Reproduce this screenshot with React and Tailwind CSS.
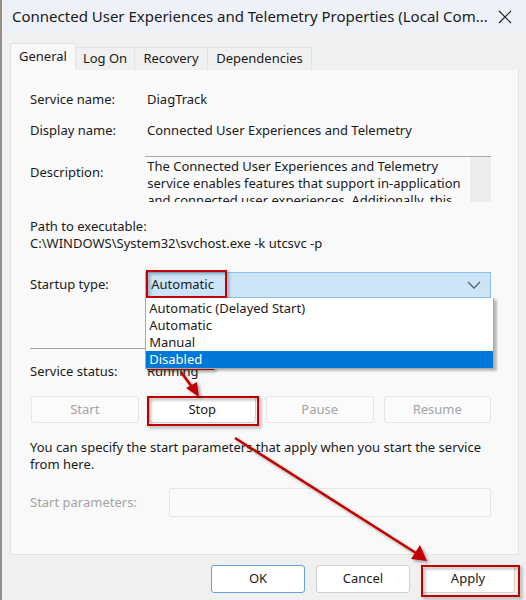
import React from 'react'

const font = { fontFamily: '"Segoe UI", "Noto Sans", sans-serif' }

function Btn({ children, disabled, className = '' }) {
  return (
    <div
      className={`h-[27px] flex items-center justify-center rounded-[3px] border text-[13px] ${
        disabled ? 'border-[#e6e6e6] bg-[#fbfbfb] text-[#a3a3a3]' : 'border-[#d0d0d0] bg-white text-[#1a1a1a]'
      } ${className}`}
    >
      {children}
    </div>
  )
}

// red callouts drawn on top of the dialog
function Annotations() {
  const red = '#c00000'
  return (
    <svg className="absolute inset-0 pointer-events-none" width="526" height="600" viewBox="0 0 526 600">
      <defs>
        <filter id="sh" x="-20%" y="-20%" width="140%" height="140%">
          <feDropShadow dx="2" dy="2" stdDeviation="1.5" floodColor="#000" floodOpacity="0.35" />
        </filter>
      </defs>
      <g filter="url(#sh)" fill="none" stroke={red} strokeWidth="2">
        <rect x="145" y="271" width="79" height="26" />
        <rect x="146" y="351" width="65" height="18" />
        <rect x="146" y="397" width="110" height="28" />
        <rect x="420" y="566" width="97" height="30" />
      </g>
      <g filter="url(#sh)" stroke={red} strokeWidth="2.5" fill={red}>
        <line x1="172" y1="298" x2="172" y2="340" />
        <polygon points="166,339 178,339 172,351" stroke="none" />
        <line x1="179" y1="372" x2="190" y2="387" />
        <polygon points="184,388 195,382 197,397" stroke="none" />
        <line x1="233" y1="438" x2="414" y2="553" />
        <polygon points="409,559 418,545 425,561" stroke="none" />
      </g>
    </svg>
  )
}

export default function App() {
  return (
    <div className="relative w-[526px] h-[600px] overflow-hidden bg-[#f0f0f0] border-l-2 border-[#9a8f88] text-[#1a1a1a]" style={font}>
      {/* title bar */}
      <div className="h-[33px] flex items-center justify-between bg-[#eef2f8] pl-[10px] pr-[14px]">
        <span className="text-[15px] text-[#1a1a1a] whitespace-nowrap">
          Connected User Experiences and Telemetry Properties (Local Com...
        </span>
        <svg width="14" height="14" viewBox="0 0 14 14" stroke="#222" strokeWidth="1.2">
          <path d="M1 1 L13 13 M13 1 L1 13" />
        </svg>
      </div>

      <div className="pl-[8px] pr-[5px]">
        {/* tabs */}
        <div className="flex items-end h-[37px] text-[13px]">
          <div className="h-[27px] w-[66px] flex items-center justify-center bg-[#f9f9f9] border border-b-0 border-[#e3e3e3]">General</div>
          <div className="h-[23px] w-[59px] flex items-center justify-center border-t border-r border-[#e3e3e3]">Log On</div>
          <div className="h-[23px] w-[73px] flex items-center justify-center border-t border-r border-[#e3e3e3]">Recovery</div>
          <div className="h-[23px] w-[104px] flex items-center justify-center border-t border-r border-[#e3e3e3]">Dependencies</div>
        </div>

        {/* panel */}
        <div className="h-[485px] w-[509px] bg-[#f9f9f9] border border-t-0 border-[#e3e3e3] pl-[19px] pr-[27px] pt-[20px] text-[13px]">
          <div className="flex h-[20px] items-center">
            <span className="w-[117px]">Service name:</span>
            <span>DiagTrack</span>
          </div>
          <div className="flex h-[20px] items-center mt-[11px]">
            <span className="w-[117px]">Display name:</span>
            <span>Connected User Experiences and Telemetry</span>
          </div>
          <div className="flex mt-[15px]">
            <span className="w-[116px] pt-[7px]">Description:</span>
            <div className="flex h-[46px] w-[348px] border-t border-[#a8a8a8] bg-[#fafafa] overflow-hidden">
              <div className="flex-1 pl-[2px] pt-[1px] leading-[17px]">
                The Connected User Experiences and Telemetry service enables features that support in-application and connected user experiences. Additionally, this
              </div>
              <div className="w-[21px] bg-[#ececec]" />
            </div>
          </div>
          <div className="mt-[16px] leading-[17px]">Path to executable:</div>
          <div className="leading-[17px]">C:\WINDOWS\System32\svchost.exe -k utcsvc -p</div>

          <div className="flex items-center mt-[20px]">
            <span className="w-[116px]">Startup type:</span>
            <div className="relative w-[348px]">
              <div className="h-[26px] flex items-center justify-between bg-[#cce4f7] border border-[#8cbfe8] pl-[5px] pr-[9px]">
                <span>Automatic</span>
                <svg width="14" height="8" viewBox="0 0 14 8" fill="none" stroke="#606060" strokeWidth="1.3">
                  <path d="M1 1 L7 7 L13 1" />
                </svg>
              </div>
              {/* open list */}
              <div className="absolute left-0 top-[26px] w-[349px] pt-[2px] bg-white border border-[#a8a8a8] border-t-0 shadow-[3px_2px_2px_rgba(0,0,0,0.25)] z-10 leading-[17px]">
                <div className="pl-[3px]">Automatic (Delayed Start)</div>
                <div className="pl-[3px]">Automatic</div>
                <div className="pl-[3px]">Manual</div>
                <div className="pl-[3px] bg-[#0078d7] text-white">Disabled</div>
              </div>
            </div>
          </div>

          <div className="mt-[50px] border-t border-[#a0a0a0]" />

          <div className="flex h-[20px] items-center mt-[13px]">
            <span className="w-[117px]">Service status:</span>
            <span>Running</span>
          </div>

          <div className="grid grid-cols-4 gap-[10px] mt-[14px] pl-[1px]">
            <Btn disabled>Start</Btn>
            <Btn>Stop</Btn>
            <Btn disabled>Pause</Btn>
            <Btn disabled>Resume</Btn>
          </div>

          <div className="mt-[16px] leading-[17px]">
            You can specify the start parameters that apply when you start the service
            <br />
            from here.
          </div>

          <div className="flex items-center mt-[15px]">
            <span className="w-[139px] text-[#a3a3a3]">Start parameters:</span>
            <div className="h-[29px] flex-1 border border-[#e6e6e6] rounded-[2px] bg-[#fafafa]" />
          </div>
        </div>

        {/* dialog buttons */}
        <div className="flex justify-end gap-[11px] mt-[10px] pr-[6px] text-[13px]">
          <div className="w-[94px] h-[28px] flex items-center justify-center rounded-[3px] bg-white border border-[#5fa2e6]">OK</div>
          <div className="w-[94px] h-[28px] flex items-center justify-center rounded-[3px] bg-white border border-[#d0d0d0]">Cancel</div>
          <div className="w-[94px] h-[28px] flex items-center justify-center rounded-[3px] bg-white border border-[#d0d0d0]">Apply</div>
        </div>
      </div>

      <Annotations />
    </div>
  )
}
